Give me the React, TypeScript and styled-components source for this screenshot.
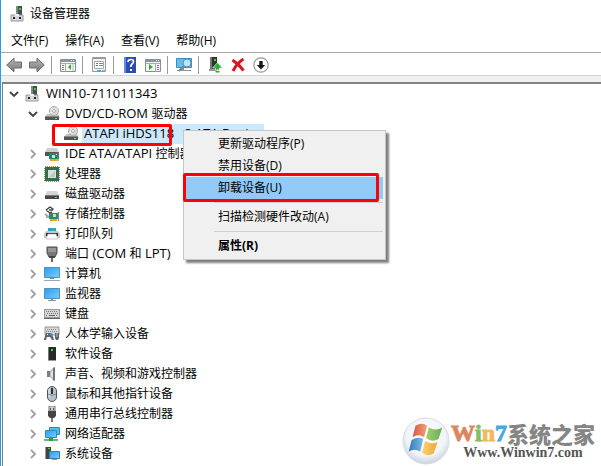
import React from "react";
import styled, { createGlobalStyle } from "styled-components";

const Global = createGlobalStyle`
  * { box-sizing: border-box; }
  html, body, #root { margin: 0; min-height: 100vh; }
  body {
    background: #fff;
    color: #000;
    font: 12px/20px "Open Sans", "Noto Sans CJK SC", sans-serif;
    overflow: hidden;
  }
`;

const Window = styled.div`
  position: relative;
  display: flex;
  flex-direction: column;
  height: 100vh;
  border-left: 1px solid #2f9be0;
  overflow: hidden;
`;

const TitleBar = styled.header`
  display: flex;
  align-items: center;
  gap: 4px;
  height: 26px;
  padding: 1px 0 0 9px;
`;

const Title = styled.h1`
  margin: 0;
  font-size: 12px;
  font-weight: 400;
`;

const MenuBar = styled.nav`
  display: flex;
  align-items: center;
  gap: 17px;
  height: 27px;
  padding: 4px 0 0 10px;
  border-bottom: 1px solid #a8a8a8;
`;

const MenuButton = styled.button`
  border: 0;
  padding: 0;
  background: none;
  color: inherit;
  font: inherit;
  white-space: nowrap;
`;

const Toolbar = styled.div`
  display: flex;
  align-items: center;
  gap: 1px;
  height: 23px;
  padding: 1px 0 0 2px;
  border-bottom: 1px solid #d4d4d4;
`;

const ToolButton = styled.button`
  display: flex;
  width: 22px;
  height: 20px;
  padding: 2px 3px;
  border: 0;
  background: none;
`;

const ToolDivider = styled.span`
  width: 1px;
  height: 18px;
  margin: 0 4px 0 2px;
  background: #9a9a9a;
`;

const TreePane = styled.main`
  flex: 1;
  padding-left: 1px;
  border-top: 6px solid #f0f0f0;
  background: #f0f0f0;
`;

const Tree = styled.ul`
  height: 100%;
  margin: 0;
  padding: 0;
  list-style: none;
  border: solid #828282;
  border-width: 2px 0 0 1px;
  background: #fff;
`;

const Group = styled.ul`
  margin: 0;
  padding: 0;
  list-style: none;
`;

const Row = styled.div<{ $level: number }>`
  display: flex;
  align-items: center;
  height: 20px;
  padding-left: ${(p) => 3 + p.$level * 19}px;
`;

const Twisty = styled.span`
  display: flex;
  width: 16px;
  height: 16px;
  margin-right: 3px;
`;

const Label = styled.span<{ $selected?: boolean }>`
  padding: 0 2px;
  margin-left: 3px;
  font-size: 12px;
  white-space: pre;
  background: ${(p) => (p.$selected ? "#cce8ff" : "transparent")};
`;

const Latin = styled.span`
  font-size: 13px;
  line-height: 1;
`;

const Marker = styled.span<{ $x: number; $y: number; $w: number; $h: number }>`
  position: absolute;
  left: ${(p) => p.$x}px;
  top: ${(p) => p.$y}px;
  width: ${(p) => p.$w}px;
  height: ${(p) => p.$h}px;
  border: 3px solid #f00;
  border-radius: 2px;
  pointer-events: none;
`;

const ContextMenu = styled.div`
  position: absolute;
  left: 182px;
  top: 130px;
  width: 203px;
  padding: 2px;
  border: 1px solid #c6c6c6;
  background: #f0f0f0;
  box-shadow: 3px 3px 2px rgba(0, 0, 0, 0.5);
`;

const MenuItem = styled.button<{ $active?: boolean; $strong?: boolean }>`
  display: block;
  width: 100%;
  height: 22px;
  padding: 0 0 0 32px;
  border: 0;
  background: ${(p) => (p.$active ? "#91c9f7" : "transparent")};
  color: inherit;
  font: inherit;
  font-weight: ${(p) => (p.$strong ? 700 : 400)};
  text-align: left;
`;

const MenuRule = styled.hr`
  height: 1px;
  margin: 3px 0 3px 28px;
  border: 0;
  background: #d0d0d0;
`;

const Brand = styled.aside`
  position: absolute;
  right: 6px;
  bottom: 1px;
  display: flex;
  align-items: center;
  gap: 1px;
`;

const BrandText = styled.div`
  display: flex;
  flex-direction: column;
  align-items: center;
  font-family: "Liberation Serif", serif;
  font-weight: 700;
`;

const BrandName = styled.div`
  display: flex;
  align-items: center;
  font-size: 24px;
  line-height: 24px;
`;

const Tint = styled.span<{ $color: string }>`
  color: ${(p) => p.$color};
  -webkit-text-stroke: 1px ${(p) => p.$color};
`;

const BrandCjk = styled.span`
  font: 900 22px/24px "Noto Sans CJK SC", sans-serif;
  color: #858585;
`;

const BrandUrl = styled.a`
  color: #555;
  font-size: 14px;
  line-height: 16px;
  text-decoration: none;
`;

function Svg({ children }: { children: React.ReactNode }) {
  return (
    <svg width="16" height="16" viewBox="0 0 16 16" aria-hidden="true">
      {children}
    </svg>
  );
}

const screen = (
  <linearGradient id="screen" x1="0" y1="0" x2="1" y2="1">
    <stop offset="0" stopColor="#2b9df0" />
    <stop offset="1" stopColor="#7accff" />
  </linearGradient>
);

const metal = (
  <linearGradient id="metal" x1="0" y1="0" x2="0" y2="1">
    <stop offset="0" stopColor="#b8b8b8" />
    <stop offset="1" stopColor="#777" />
  </linearGradient>
);

const icons: Record<string, React.ReactNode> = {
  host: (
    <>
      <path d="M6 0h6v10H6z" fill="#484d50" /><path d="M6 0h2v10H6z" fill="#888" />
      <path d="M9 2h2v2H9z" fill="#24e03a" />
      <path d="M1 9h12v6H1z" fill="#d5d7d9" stroke="#999" />
      <path d="M3 11h2v2H3zM9 11h2v2H9z" fill="#222" /><path d="M5 8h4v2H5z" fill="#eee" />
    </>
  ),
  disc: (
    <>
      <path d="M3 8h11l2 4H1z" fill="#c2c2c2" />
      <circle cx="10" cy="5" r="4.5" fill="#ddd" stroke="#aaa" />
      <path d="M7 2l3 3 3-3M6 7l4-2" stroke="#f8f8f8" fill="none" />
      <circle cx="10" cy="5" r="1.5" fill="#fff" stroke="#aaa" />
      <path d="M1 10h14v4H1z" fill="#555" /><path d="M1 10h14v1H1z" fill="#888" />
      <path d="M11 12h2v1h-2z" fill="#50ed52" />
    </>
  ),
  ide: (
    <>
      <path d="M3 2h10l2 4H1z" fill="#cfcfcf" /><path d="M1 6h14v4H1z" fill="#555" />
      <path d="M5 7h10v6H5z" fill="#24856a" /><path d="M6 13h7v2H6z" fill="#f0a515" />
      <path d="M8 9h3v3H8z" fill="#bce8bd" /><path d="M14 6v9" stroke="#777" />
      <path d="M12 8h1v1h-1z" fill="#fff" />
    </>
  ),
  cpu: (
    <>
      <path d="M1 1h14v14H1z" fill="#27664b" stroke="#a18c49" strokeDasharray="1 1" strokeWidth="2" />
      <path d="M1 1h14v14H1z" fill="#2f6e50" /><path d="M4 4h8v8H4z" fill="#dfe0dc" />
      <path d="M5 11l6-6v6z" fill="#c3c7bf" />
    </>
  ),
  disk: (
    <>
      <path d="M3 5h10l2 4H1z" fill="#d5d5d5" /><path d="M1 9h14v4H1z" fill="#454545" />
      <path d="M1 9h14v1H1z" fill="#777" /><path d="M11 11h2v1h-2z" fill="#50ed52" />
    </>
  ),
  storage: (
    <>
      <path d="M2 4l4-3 3 2-1 1M2 4l4 3 2-1M5 4h4" fill="none" stroke="#444" strokeWidth="1.4" />
      <path d="M1 8l4 3M2 11h3" stroke="#aaa" strokeWidth="2" />
      <path d="M5 7h10v6H5z" fill="#31886c" /><path d="M9 8h3v3H9z" fill="#bbe3c3" />
      <path d="M6 13h7v2H6z" fill="#f0a515" /><path d="M14.5 6v9" stroke="#888" />
    </>
  ),
  printer: (
    <>
      <path d="M4 2h8v4H4z" fill="#3597df" /><path d="M8 2h3v4H8z" fill="#2eb989" />
      <path d="M2 5h12l2 3v4H0V8z" fill="#c5c8cb" /><path d="M2 7h12v3H2z" fill="#333" />
      <path d="M4 8h8l2 5H2z" fill="#fff" stroke="#aaa" strokeWidth=".6" />
    </>
  ),
  port: (
    <>
      <path d="M3 1h10v6l-2 4H5L3 7z" fill="#777" stroke="#4f4f4f" />
      <path d="M5 2v4M7 2v4M9 2v4M11 2v4" stroke="#ccc" strokeWidth=".8" />
      <path d="M5 10h6v2H5z" fill="#444" /><path d="M7 12h2v4H7z" fill="#666" />
    </>
  ),
  computer: (
    <>
      {screen}<path d="M.5 1.5h15v10H.5z" fill="url(#screen)" stroke="#5290b7" />
      <path d="M6 12h4v1H6z" fill="#888" /><path d="M0 14h16v1H0z" fill="#99a8b3" />
    </>
  ),
  monitor: (
    <>
      {screen}<path d="M.5 2.5h15v10H.5z" fill="url(#screen)" stroke="#5290b7" />
      <path d="M7 13h2v1h3v1H4v-1h3z" fill="#89959d" />
    </>
  ),
  keyboard: (
    <>
      <path d="M0 3h16v10H0z" fill="#999" /><path d="M1 4h14v7H1z" fill="#d6d6d6" />
      <path d="M2 5.5h12M3 7.5h11M2 9.5h2m8 0h2" stroke="#777" strokeDasharray="1 1" />
      <path d="M5 9h6v1H5z" fill="#666" /><path d="M0 12h16v1H0z" fill="#666" />
    </>
  ),
  hid: (
    <>
      <path d="M1 1h14v8H1z" fill="#d5d5d5" stroke="#999" />
      <path d="M3 3.5h10M2 5.5h12" stroke="#888" strokeDasharray="1 1" />
      <path d="M0 13l2-6h6l2 7H8l-2-3H3l-1 3H0z" fill="#5d6870" />
      <path d="M3 8h1v1H3z" fill="#fff" /><path d="M6 7h2v2H6z" fill="#2b9bea" /><path d="M7 9h2v1H7z" fill="#e95a38" />
      <path d="M11 7h4v5l-1 2h-2l-1-2z" fill="#536471" /><path d="M13 7v4" stroke="#bcd" />
    </>
  ),
  software: (
    <>
      <path d="M4 1h8v14H4z" fill="#292929" /><path d="M4 1h1v14H4z" fill="#777" />
      <path d="M7 3h2v2H7z" fill="#29e53b" /><path d="M4 14h8v1H4z" fill="#999" />
    </>
  ),
  sound: (
    <>
      <path d="M3 5h3v6H3z" fill="#788086" /><path d="M6 5l4-4v14l-4-4z" fill="#b8bec3" />
      <path d="M9 2l2-1v14l-2-1z" fill="#6e767c" /><path d="M7 6l2-2v8l-2-2z" fill="#dce1e4" />
    </>
  ),
  mouse: (
    <>
      <rect x="3.5" y=".5" width="9" height="15" rx="4.5" fill="#b6c1ca" stroke="#4b555d" />
      <path d="M5 3v8" stroke="#edf3f8" /><path d="M7 2h2v6H7z" fill="#29333c" />
      <path d="M4 8q4 3 8 0" stroke="#7c8790" fill="none" />
    </>
  ),
  usb: (
    <>
      <path d="M5 0h6v5H5z" fill="#d1d1d1" stroke="#777" /><path d="M6 2h1v2H6zM9 2h1v2H9z" fill="#555" />
      <path d="M4 5h8v5l-2 2H6l-2-2z" fill="#454545" /><path d="M7 12h2v4H7z" fill="#777" />
    </>
  ),
  network: (
    <>
      {screen}<path d="M5.5 1.5h10v7h-10z" fill="#59b7ef" stroke="#268ac4" />
      <path d="M1.5 4.5h11v7h-11z" fill="url(#screen)" stroke="#3588b9" />
      <path d="M6 12h2v1h6v2H0v-2h6z" fill="#5cc16f" /><path d="M5 12h4v3H5z" fill="#2f9e4c" />
    </>
  ),
  system: (
    <>
      {screen}<path d="M1 1h6v12H1z" fill="#444" /><path d="M1 1h1v12H1z" fill="#999" />
      <path d="M4 2h2v1H4z" fill="#2fe044" />
      <path d="M5.5 5.5h10v7h-10z" fill="url(#screen)" stroke="#397ca2" />
      <path d="M8 13h5v1H8z" fill="#999" />
    </>
  ),
  back: (
    <>
      {metal}
      <path d="M.7 8L8 1.200V5h7.500v6H8v3.800z" fill="url(#metal)" stroke="#6c6c6c" strokeLinejoin="round" />
    </>
  ),
  forward: (
    <>
      {metal}
      <path d="M15.300 8L8 1.200V5H.5v6H8v3.800z" fill="url(#metal)" stroke="#6c6c6c" strokeLinejoin="round" />
    </>
  ),
  panes: (
    <>
      <path d="M.5 2.500h15v12H.5z" fill="#f5f5f5" stroke="#849097" /><path d="M1 3h14v2H1z" fill="#8a969f" />
      <path d="M11 3h1v1h-1zM13 3h1v1h-1z" fill="#fff" /><path d="M5.500 6v9M1 6.500h14" stroke="#aaa" />
      <path d="M2 8h2v1H2zM2 10h2v1H2zM2 12h2v1H2z" fill="#5c86a0" />
      <path d="M8 10l3-3v6z" fill="#26b52b" /><path d="M13 7v7" stroke="#bbb" />
    </>
  ),
  properties: (
    <>
      <path d="M1.500.5h13v14h-13z" fill="#f3f3f3" stroke="#999" /><path d="M2 1h12v1H2z" fill="#999" />
      <path d="M3.500 4.500h9v7h-9z" fill="#fff" stroke="#a6adb1" />
      <path d="M5 6h2v1H5zM5 8h2v1H5z" fill="#388abf" /><path d="M8 6.500h4M8 8.500h4" stroke="#888" />
      <path d="M6 13h4v2H6z" fill="#25bbdd" /><path d="M11 13h3v1h-3z" fill="#aaa" />
    </>
  ),
  help: (
    <>
      <path d="M2 0h12v16H2z" fill="#2d4eac" /><path d="M2 0h2v16H2z" fill="#648be1" />
      <path d="M6 5q0-2.500 3-2.500 2.500 0 2.500 2 0 1.500-1.500 2.500-1.200 1-1.200 3" fill="none" stroke="#fff" strokeWidth="1.700" />
      <path d="M8 12h2v2H8z" fill="#fff" />
    </>
  ),
  actions: (
    <>
      <path d="M.5 2.500h15v12H.5z" fill="#f5f5f5" stroke="#849097" /><path d="M1 3h14v2H1z" fill="#8a969f" />
      <path d="M11 3h1v1h-1zM13 3h1v1h-1z" fill="#fff" /><path d="M10.500 6v9M1 6.500h14" stroke="#aaa" />
      <path d="M4 7l4 3-4 3z" fill="#26b52b" /><path d="M12 8h2v1h-2zM12 10h2v1h-2zM12 12h2v1h-2z" fill="#5c86a0" />
    </>
  ),
  scan: (
    <>
      <path d="M.5 1.500h15v9H.5z" fill="#62bdf0" stroke="#438bb4" />
      <path d="M5 11h3v2h7v1H1v-1h4z" fill="#8a969f" />
      <path d="M8 9l-5 5" stroke="#75868f" strokeWidth="2" />
      <circle cx="11" cy="6" r="4" fill="#b9e4fa" stroke="#668b9f" />
    </>
  ),
  update: (
    <>
      <path d="M3 0h7v12H3z" fill="#333" /><path d="M3 0h2v12H3z" fill="#777" /><path d="M7 2h2v2H7z" fill="#29e53b" />
      <path d="M2 12h8v2H2z" fill="#999" /><path d="M10.500 5.500l5 5.500h-3v2h-4v-2h-3z" fill="#1fb637" stroke="#fff" strokeWidth=".6" />
      <path d="M8.500 14h4v1.500h-4z" fill="#1fb637" />
    </>
  ),
  remove: <path d="M2.500 3q6 4 11 10.500M13.500 2Q7 6 3 14" stroke="#dc141e" strokeWidth="3" fill="none" />,
  disable: (
    <>
      <circle cx="8" cy="8" r="7.200" fill="#fff" stroke="#999" strokeWidth="1.200" />
      <path d="M6.300 4h3.400v4h2.500L8 12.500 3.800 8h2.500z" fill="#171717" />
    </>
  ),
  open: <path d="M4 6l4 4 4-4" fill="none" stroke="#404040" strokeWidth="1.800" />,
  closed: <path d="M6 4l4 4-4 4" fill="none" stroke="#a0a0a0" strokeWidth="1.800" />,
};

const tools: [string, string][] = [
  ["back", "后退"], ["forward", "前进"], ["|", "a"], ["panes", "显示控制台树"], ["|", "b"],
  ["properties", "属性"], ["|", "c"], ["help", "帮助"], ["actions", "操作窗格"], ["|", "d"],
  ["scan", "扫描检测硬件改动"], ["|", "e"], ["update", "更新驱动程序"], ["remove", "卸载设备"], ["disable", "禁用设备"],
];

const devices: [string, string][] = [
  ["ide", "IDE ATA/ATAPI 控制器"], ["cpu", "处理器"], ["disk", "磁盘驱动器"], ["storage", "存储控制器"],
  ["printer", "打印队列"], ["port", "端口 (COM 和 LPT)"], ["computer", "计算机"], ["monitor", "监视器"],
  ["keyboard", "键盘"], ["hid", "人体学输入设备"], ["software", "软件设备"], ["sound", "声音、视频和游戏控制器"],
  ["mouse", "鼠标和其他指针设备"], ["usb", "通用串行总线控制器"], ["network", "网络适配器"], ["system", "系统设备"],
];

interface NodeProps {
  icon: string;
  label: string;
  level: number;
  state?: "open" | "closed";
  selected?: boolean;
  children?: React.ReactNode;
}

/* Latin runs are set one size larger than the Chinese text beside them. */
function mixedText(text: string) {
  return text
    .split(/([ -~]+)/)
    .filter(Boolean)
    .map((run, i) => (/^[ -~]/.test(run) ? <Latin key={i}>{run}</Latin> : run));
}

function TreeNode({ icon, label, level, state, selected, children }: NodeProps) {
  return (
    <li role="treeitem" aria-expanded={state ? state === "open" : undefined} aria-selected={!!selected}>
      <Row $level={level}>
        <Twisty>{state && <Svg>{icons[state]}</Svg>}</Twisty>
        <Svg>{icons[icon]}</Svg>
        <Label $selected={selected}>{mixedText(label)}</Label>
      </Row>
      {children && <Group role="group">{children}</Group>}
    </li>
  );
}

function BrandOrb() {
  return (
    <svg width="48" height="48" viewBox="0 0 50 50" aria-hidden="true">
      <defs>
        <radialGradient id="orb" cx=".5" cy=".4" r=".6">
          <stop offset="0" stopColor="#fff" /><stop offset=".7" stopColor="#f1f4f8" /><stop offset="1" stopColor="#c8d2de" />
        </radialGradient>
        <linearGradient id="red"><stop stopColor="#d65a45" /><stop offset="1" stopColor="#f0a077" /></linearGradient>
        <linearGradient id="green"><stop stopColor="#a8cf72" /><stop offset="1" stopColor="#65ad58" /></linearGradient>
        <linearGradient id="blue"><stop stopColor="#3479bc" /><stop offset="1" stopColor="#7bbbe4" /></linearGradient>
        <linearGradient id="gold"><stop stopColor="#fbd36b" /><stop offset="1" stopColor="#eda643" /></linearGradient>
      </defs>
      <circle cx="25" cy="25" r="24" fill="url(#orb)" stroke="#d3dae4" />
      <path d="M14 9q7-4 12 0l-3 12q-6-4-12 0z" fill="url(#red)" />
      <path d="M28 11q7 4 14 0l-4 12q-7 4-13-1z" fill="url(#green)" />
      <path d="M10 24q7-4 12-1l-3 13q-6-4-12 0z" fill="url(#blue)" />
      <path d="M24 25q7 4 13 1l-4 12q-7 4-12-1z" fill="url(#gold)" />
    </svg>
  );
}

export default function App() {
  return (
    <>
      <Global />
      <Window>
        <TitleBar>
          <Svg>{icons.host}</Svg>
          <Title>设备管理器</Title>
        </TitleBar>
        <MenuBar>
          {["文件(F)", "操作(A)", "查看(V)", "帮助(H)"].map((m) => (
            <MenuButton key={m}>{m}</MenuButton>
          ))}
        </MenuBar>
        <Toolbar role="toolbar">
          {tools.map(([icon, name]) =>
            icon === "|" ? (
              <ToolDivider key={name} />
            ) : (
              <ToolButton key={name} aria-label={name}><Svg>{icons[icon]}</Svg></ToolButton>
            ),
          )}
        </Toolbar>
        <TreePane>
          <Tree role="tree">
            <TreeNode icon="host" label="WIN10-711011343" level={0} state="open">
              <TreeNode icon="disc" label="DVD/CD-ROM 驱动器" level={1} state="open">
                <TreeNode icon="disc" label="ATAPI iHDS118   8 ATA Device" level={2} selected />
              </TreeNode>
              {devices.map(([icon, label]) => (
                <TreeNode key={icon} icon={icon} label={label} level={1} state="closed" />
              ))}
            </TreeNode>
          </Tree>
        </TreePane>
        <Marker $x={51} $y={124} $w={120} $h={22} />
        <ContextMenu role="menu">
          <MenuItem role="menuitem">更新驱动程序(P)</MenuItem>
          <MenuItem role="menuitem">禁用设备(D)</MenuItem>
          <MenuItem role="menuitem" $active>卸载设备(U)</MenuItem>
          <MenuRule />
          <MenuItem role="menuitem">扫描检测硬件改动(A)</MenuItem>
          <MenuRule />
          <MenuItem role="menuitem" $strong>属性(R)</MenuItem>
        </ContextMenu>
        <Marker $x={182} $y={173} $w={196} $h={29} />
        <Brand>
          <BrandOrb />
          <BrandText>
            <BrandName>
              <Tint $color="#dc8560">W</Tint>
              <Tint $color="#85bd69">i</Tint>
              <Tint $color="#f3b95c">n</Tint>
              <Tint $color="#4aa9dc">7</Tint>
              <BrandCjk>系统之家</BrandCjk>
            </BrandName>
            <BrandUrl href="#">Www.Winwin7.com</BrandUrl>
          </BrandText>
        </Brand>
      </Window>
    </>
  );
}
